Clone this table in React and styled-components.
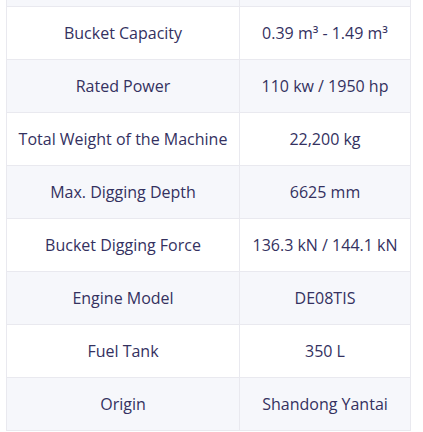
import React from 'react';
import styled, { createGlobalStyle } from 'styled-components';

const GlobalStyle = createGlobalStyle`
  html, body {
    margin: 0;
    padding: 0;
    background: #ffffff;
  }
  body {
    font-family: "Open Sans", "Noto Sans", sans-serif;
  }
`;

const Wrapper = styled.div`
  width: 423px;
  height: 432px;
  overflow: hidden;
  padding: 0 0 0 6px;
  box-sizing: border-box;
`;

const Table = styled.table`
  border-collapse: collapse;
  table-layout: fixed;
`;

const Row = styled.tr`
  background: ${props => (props.$shaded ? '#f6f7fb' : '#ffffff')};
`;

const Cell = styled.td`
  height: 52px;
  padding: 0;
  border: 1px solid #e9e9ef;
  text-align: center;
  vertical-align: middle;
  font-size: 16px;
  font-weight: 400;
  color: #34315f;
  white-space: nowrap;
  width: ${props => props.$w}px;
  box-sizing: content-box;
`;

const EdgeCell = styled.td`
  height: 6px;
  padding: 0;
  border: 1px solid #e9e9ef;
  border-top: none;
  width: ${props => props.$w}px;
  box-sizing: content-box;
`;

const rows = [
  ['Bucket Capacity', '0.39 m³ - 1.49 m³'],
  ['Rated Power', '110 kw / 1950 hp'],
  ['Total Weight of the Machine', '22,200 kg'],
  ['Max. Digging Depth', '6625 mm'],
  ['Bucket Digging Force', '136.3 kN / 144.1 kN'],
  ['Engine Model', 'DE08TIS'],
  ['Fuel Tank', '350 L'],
  ['Origin', 'Shandong Yantai'],
];

const App = () => (
  <Wrapper>
    <GlobalStyle />
    <Table>
      <tbody>
        <Row $shaded>
          <EdgeCell $w={232} />
          <EdgeCell $w={170} />
        </Row>
        {rows.map(([label, value], i) => (
          <Row key={label} $shaded={i % 2 === 1}>
            <Cell $w={232}>{label}</Cell>
            <Cell $w={170}>{value}</Cell>
          </Row>
        ))}
      </tbody>
    </Table>
  </Wrapper>
);

export default App;
